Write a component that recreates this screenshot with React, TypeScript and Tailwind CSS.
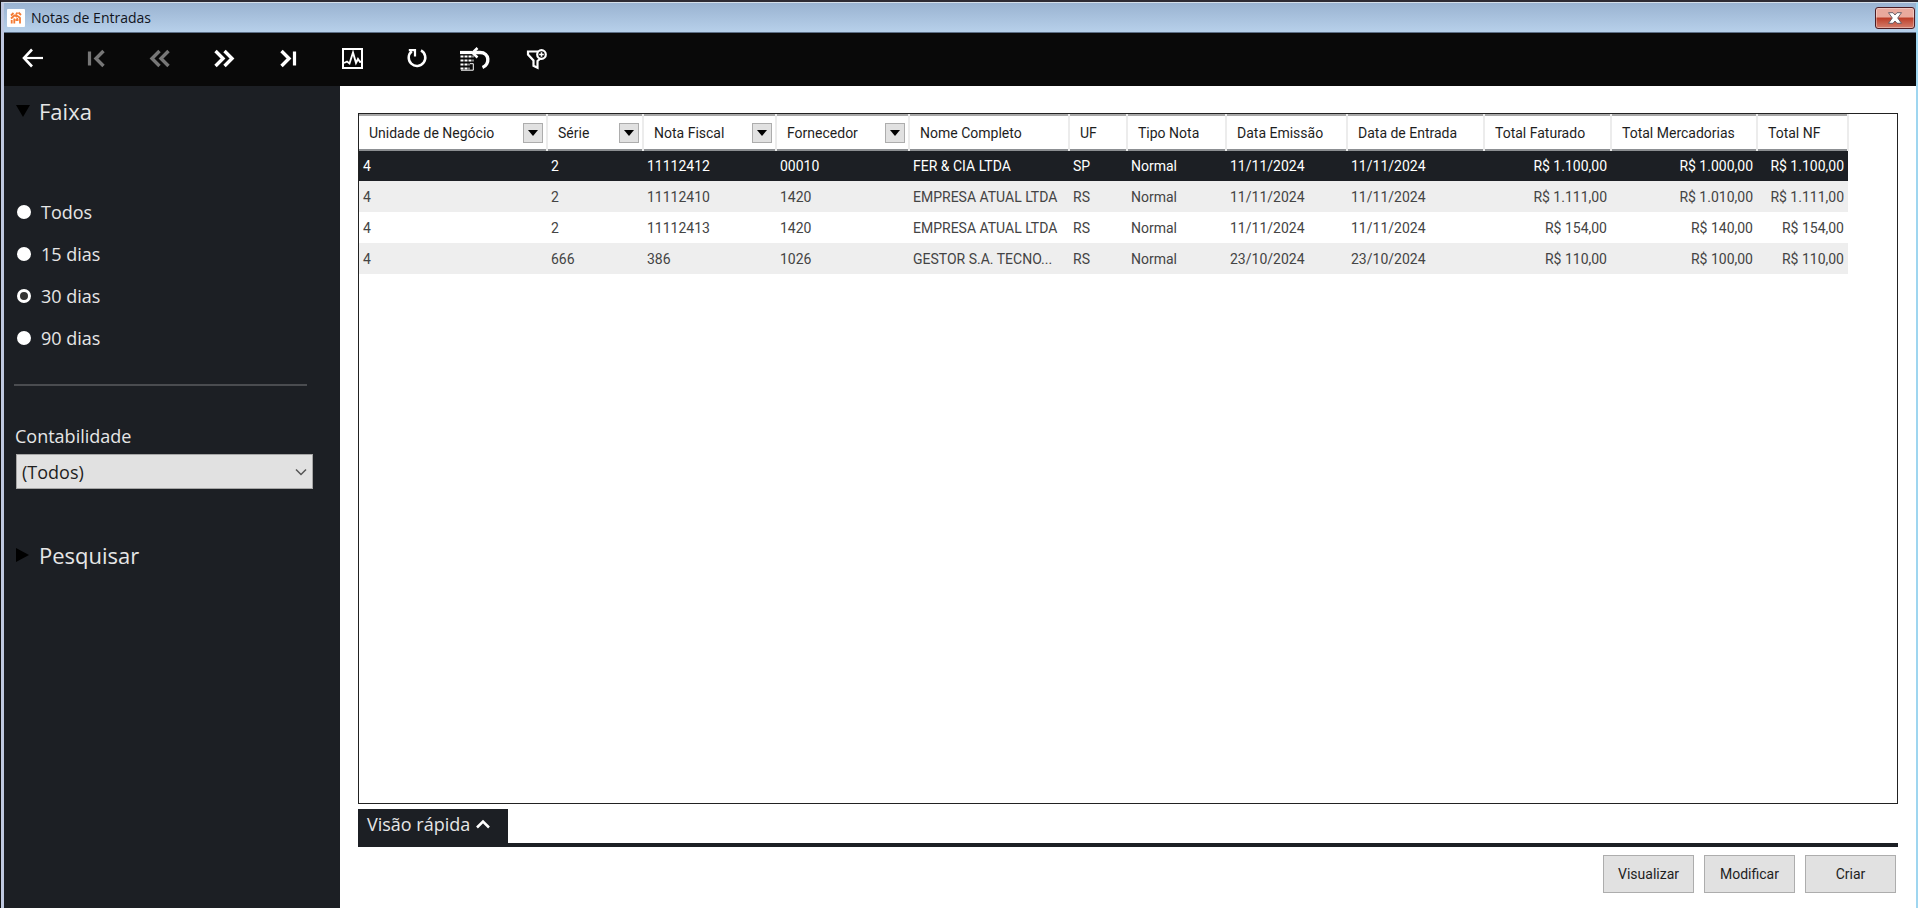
import React from 'react';

type Column = {
  label: string;
  width: string;
  filter?: boolean;
  right?: boolean;
};

const columns: Column[] = [
  { label: 'Unidade de Negócio', width: 'w-[188px]', filter: true },
  { label: 'Série', width: 'w-[96px]', filter: true },
  { label: 'Nota Fiscal', width: 'w-[133px]', filter: true },
  { label: 'Fornecedor', width: 'w-[133px]', filter: true },
  { label: 'Nome Completo', width: 'w-[160px]' },
  { label: 'UF', width: 'w-[58px]' },
  { label: 'Tipo Nota', width: 'w-[99px]' },
  { label: 'Data Emissão', width: 'w-[121px]' },
  { label: 'Data de Entrada', width: 'w-[137px]' },
  { label: 'Total Faturado', width: 'w-[127px]', right: true },
  { label: 'Total Mercadorias', width: 'w-[146px]', right: true },
  { label: 'Total NF', width: 'w-[91px]', right: true },
];

const rows = [
  ['4', '2', '11112412', '00010', 'FER & CIA LTDA', 'SP', 'Normal', '11/11/2024', '11/11/2024', 'R$ 1.100,00', 'R$ 1.000,00', 'R$ 1.100,00'],
  ['4', '2', '11112410', '1420', 'EMPRESA ATUAL LTDA', 'RS', 'Normal', '11/11/2024', '11/11/2024', 'R$ 1.111,00', 'R$ 1.010,00', 'R$ 1.111,00'],
  ['4', '2', '11112413', '1420', 'EMPRESA ATUAL LTDA', 'RS', 'Normal', '11/11/2024', '11/11/2024', 'R$ 154,00', 'R$ 140,00', 'R$ 154,00'],
  ['4', '666', '386', '1026', 'GESTOR S.A. TECNO...', 'RS', 'Normal', '23/10/2024', '23/10/2024', 'R$ 110,00', 'R$ 100,00', 'R$ 110,00'],
];

const ranges = ['Todos', '15 dias', '30 dias', '90 dias'];

const ToolButton: React.FC<{ label: string; dim?: boolean; children: React.ReactNode }> = ({ label, dim, children }) => (
  <button
    type="button"
    aria-label={label}
    className={`flex h-full w-14 items-center justify-center ${dim ? 'text-[#777777]' : 'text-white'}`}
  >
    <svg width="32" height="26" viewBox="0 0 32 26" fill="none" stroke="currentColor" strokeWidth="2.6">
      {children}
    </svg>
  </button>
);

const TitleBar: React.FC = () => (
  <header className="flex h-[30px] items-center justify-between border-b border-[#5d6f86] bg-linear-to-b from-[#9ab3d1] to-[#b7d0ea] pl-[3px] pr-px">
    <div className="flex items-center gap-[6px]">
      <svg width="18" height="18" viewBox="0 0 18 18">
        <rect width="18" height="18" rx="1" fill="#fff" />
        <g stroke="#f47a33" strokeWidth="1.8" fill="none">
          <path d="M4 6.5 6.5 4 M9 5.5 10.5 3.5 M11.5 3.5 14 6 M4 9.5 8 6 M8 6 10 8 M13.5 9 9.5 6.5" />
          <path d="M4.7 14.5V11 M7.3 14.5V9.5 M10.3 9V11.5 M13 14.5V9 M8.5 11h3" />
        </g>
      </svg>
      <h1 className="text-sm text-[#10141c]">Notas de Entradas</h1>
    </div>
    <button
      type="button"
      aria-label="Fechar"
      className="flex h-[22px] w-10 items-center justify-center rounded-[3px] border border-[#4c1d24] bg-linear-to-b from-[#e9a99d] from-45% via-[#bc3c27] via-50% to-[#d47d6c] shadow-[inset_0_0_0_1px_rgba(255,255,255,0.35)]"
    >
      <svg width="16" height="12" viewBox="0 0 16 12">
        <path d="M1.500.7h4.500L8 3 10 .7h4.500L10.700 6l3.800 5.300H10L8 9l-2 2.300H1.500L5.300 6z" fill="#fff" stroke="#5c5560" strokeWidth="0.9" />
      </svg>
    </button>
  </header>
);

const Toolbar: React.FC = () => (
  <nav className="flex h-[53px] bg-[#090909]">
    <div className="flex gap-2 pb-[3px]">
      <ToolButton label="Voltar">
        <path d="M8 13h19" strokeWidth="2.2" />
        <path d="M16 4.500 8 13l8 8.500" />
      </ToolButton>
      <ToolButton label="Primeiro" dim>
        <path d="M9.500 6.500v14" strokeWidth="3.200" />
        <path d="M23.500 6 16 13.500l7.500 7.500" strokeWidth="3.400" />
      </ToolButton>
      <ToolButton label="Anterior" dim>
        <path d="m15.500 6-7.500 7.500 7.500 7.500M24.500 6 17 13.500l7.500 7.500" strokeWidth="3.400" />
      </ToolButton>
      <ToolButton label="Próximo">
        <path d="m7.500 6 7.500 7.500L7.500 21M16.500 6l7.500 7.500-7.500 7.500" strokeWidth="3.400" />
      </ToolButton>
      <ToolButton label="Último">
        <path d="m9.500 6 7.500 7.500L9.500 21" strokeWidth="3.400" />
        <path d="M22.500 6.500v14" strokeWidth="3.200" />
      </ToolButton>
      <ToolButton label="Gráfico">
        <rect x="7" y="4" width="19" height="19" strokeWidth="2" />
        <path d="m8 18 3-1.500 2.500 2 3.500-11 3 10.500 2-4 2 3 2-.5" strokeWidth="1.900" />
      </ToolButton>
      <ToolButton label="Atualizar">
        <path d="M11.800 6.200a8.300 8.300 0 1 0 9.200-.8" strokeWidth="2.500" />
        <path d="M8.800 5.200H15v6.300" strokeWidth="2.200" />
      </ToolButton>
    </div>
    <div className="ml-[3px] flex gap-[6px] pb-[3px]">
      <ToolButton label="Restaurar colunas">
        <path d="M1 7.500h12" strokeWidth="3.200" />
        <path d="M1.500 11.500h13M1.500 15.500h13M1.500 19.500h9M1.500 23.500h9" strokeDasharray="3 1" strokeWidth="2.200" />
        <path d="M11 18.700h3.300v6.500H2" strokeWidth="1" />
        <path d="m18.500 3-5 4.700 5 4.800" strokeWidth="2.600" />
        <path d="M14 7.500h7c10 0 10 12 2.500 15" strokeWidth="3.400" />
      </ToolButton>
      <ToolButton label="Filtrar">
        <path d="M17 6.500H7v3l5.500 6v5.200l4 2V16l3-2.500" strokeWidth="2.200" />
        <circle cx="20.500" cy="9.500" r="4.300" strokeWidth="2.200" />
        <path d="M20.500 7.200v4.600M18.200 9.500h4.600" strokeWidth="1.500" />
      </ToolButton>
    </div>
  </nav>
);

const Sidebar: React.FC = () => (
  <aside className="w-[336px] shrink-0 bg-[#1c1f24] px-[10px] text-lg text-[#e6e6e6]">
    <button type="button" className="mt-[7px] flex h-9 items-center gap-[7px] pl-[2px] text-[22px]">
      <svg width="16" height="14" viewBox="0 0 16 14">
        <path d="M0 1h14L7 13z" fill="#000" />
      </svg>
      Faixa
    </button>

    <div role="radiogroup" aria-label="Faixa" className="mt-[69px] space-y-[14px] pl-[3px]">
      {ranges.map((range) => (
        <label key={range} className="flex h-7 items-center gap-[10px]">
          <input
            type="radio"
            name="faixa"
            defaultChecked={range === '30 dias'}
            className="size-[14px] appearance-none rounded-full border-[3px] border-white bg-white checked:bg-[#333333]"
          />
          {range}
        </label>
      ))}
    </div>

    <hr className="mt-8 w-[293px] border-t-2 border-[#4a4c50]" />

    <label htmlFor="contabilidade" className="mt-9 block h-8 pl-px leading-[28px]">
      Contabilidade
    </label>
    <div className="relative ml-[2px] w-[297px]">
      <select
        id="contabilidade"
        className="block h-[35px] w-full appearance-none border border-[#a5a5a5] bg-[#e1e1e1] px-[5px] text-[#1e1e1e]"
      >
        <option>(Todos)</option>
      </select>
      <svg className="pointer-events-none absolute right-[6px] top-[14px]" width="12" height="8" viewBox="0 0 12 8">
        <path d="m1 1.500 5 5 5-5" fill="none" stroke="#555" strokeWidth="1.500" />
      </svg>
    </div>

    <button type="button" className="mt-12 flex h-9 items-center gap-[7px] pl-[2px] text-[22px]">
      <svg width="16" height="14" viewBox="0 0 16 14">
        <path d="M0 0v14l13-7z" fill="#000" />
      </svg>
      Pesquisar
    </button>
  </aside>
);

const NotesTable: React.FC = () => (
  <table className="w-[1489px] table-fixed border-collapse text-left font-['Roboto','Liberation_Sans',sans-serif] text-sm">
    <thead>
      <tr className="h-[35px] border-b-2 border-t-2 border-b-[#8c8f92] border-t-[#a8a8a8]">
        {columns.map((col) => (
          <th key={col.label} className={`${col.width} border-r-2 border-[#ececec] p-0 pl-[10px] font-normal text-[#1e1e1e]`}>
            <div className="flex items-center justify-between whitespace-nowrap pr-[3px]">
              {col.label}
              {col.filter && (
                <button
                  type="button"
                  aria-label={`Filtrar ${col.label}`}
                  className="flex size-5 items-center justify-center border border-[#adadad] bg-[#e1e1e1]"
                >
                  <svg width="10" height="6" viewBox="0 0 10 6">
                    <path d="M0 0h10L5 6z" fill="#000" />
                  </svg>
                </button>
              )}
            </div>
          </th>
        ))}
      </tr>
    </thead>
    <tbody>
      {rows.map((row, r) => (
        <tr
          key={row[2]}
          className={`h-[31px] ${r === 0 ? 'bg-[#1c1f24] text-white' : 'text-[#444444] odd:bg-white even:bg-[#eeeeee]'}`}
        >
          {row.map((cell, c) => (
            <td key={columns[c].label} className={`whitespace-nowrap px-1 py-0 ${columns[c].right ? 'text-right' : ''}`}>
              {cell}
            </td>
          ))}
        </tr>
      ))}
    </tbody>
  </table>
);

const App: React.FC = () => {
  return (
    <div className="flex min-h-screen flex-col border-l border-t-2 border-l-[#111111] border-t-[#2e2b33] bg-white font-['Open_Sans','Noto_Sans',sans-serif]">
      <div className="flex flex-1 flex-col border-l-[3px] border-r-2 border-t border-l-[#bfc8e0] border-r-[#9fd6f0] border-t-[#d5dfea]">
        <TitleBar />
        <Toolbar />
        <div className="flex flex-1">
          <Sidebar />
          <main className="flex min-w-0 flex-1 flex-col px-[18px] pt-[27px]">
            <section className="flex-1 overflow-hidden border border-[#222222]">
              <NotesTable />
            </section>
            <div className="mt-[5px] flex border-b-4 border-[#1c1f24]">
              <button type="button" className="flex h-[34px] w-[150px] items-center gap-[6px] bg-[#1c1f24] pb-1 pl-[9px] text-lg text-[#e6e6e6]">
                Visão rápida
                <svg width="14" height="10" viewBox="0 0 14 10">
                  <path d="m1 8.500 6-6 6 6" fill="none" stroke="#fff" strokeWidth="2.500" />
                </svg>
              </button>
            </div>
            <div className="flex justify-end gap-[10px] pb-[15px] pr-[2px] pt-2 font-['Roboto','Liberation_Sans',sans-serif] text-sm text-[#1e1e1e]">
              {['Visualizar', 'Modificar', 'Criar'].map((action) => (
                <button key={action} type="button" className="h-[38px] w-[91px] border border-[#adadad] bg-[#e1e1e1]">
                  {action}
                </button>
              ))}
            </div>
          </main>
        </div>
      </div>
    </div>
  );
};

export default App;
